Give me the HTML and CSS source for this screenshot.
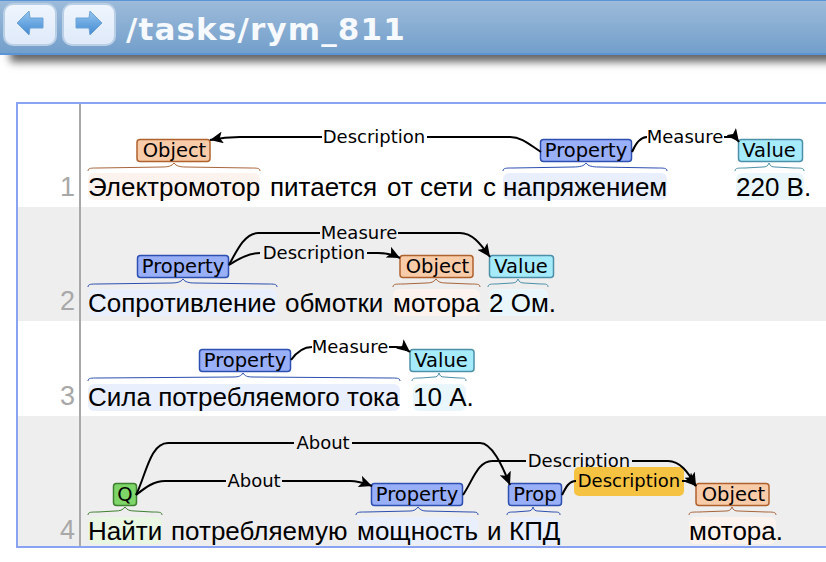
FILE: index.html
```html
<!DOCTYPE html>
<html>
<head>
    <title>/tasks/rym_811</title>
    <link rel="stylesheet" href="styles.css">
</head>
<body>
    <!-- Header -->
    <header class="header">
        <button class="nav-btn">
            <svg class="nav-arrow" viewBox="0 0 28 26">
                <defs>
                    <linearGradient id="arrowFill" x1="0" y1="0" x2="0" y2="1">
                        <stop offset="0" stop-color="#94c6f0"/>
                        <stop offset="1" stop-color="#4289d2"/>
                    </linearGradient>
                </defs>
                <path class="arrow-shape" d="M1 13 L13 1 L14 8 H27 V18 H14 L13 25 Z"/>
            </svg>
        </button>
        <button class="nav-btn">
            <svg class="nav-arrow flip" viewBox="0 0 28 26">
                <path class="arrow-shape" d="M1 13 L13 1 L14 8 H27 V18 H14 L13 25 Z"/>
            </svg>
        </button>
        <h1 class="title">/tasks/rym_811</h1>
    </header>

    <!-- Annotated document -->
    <main class="doc">

        <div class="row">
            <div class="num">1</div>
            <svg class="viz" width="745" height="103" viewBox="81 104 745 103">
                <defs>
                    <marker id="arrow" markerUnits="userSpaceOnUse" markerWidth="14" markerHeight="12" refX="13" refY="6" orient="auto">
                        <path d="M0 0 L13 6 L0 12 L3 6 Z"/>
                    </marker>
                </defs>

                <rect class="hl hl-object" x="88" y="173" width="172" height="27" rx="6"/>
                <rect class="hl hl-property" x="503" y="173" width="164" height="27" rx="6"/>
                <rect class="hl hl-value" x="736" y="173" width="68" height="27" rx="6"/>

                <text class="word" x="88" y="196">Электромотор</text>
                <text class="word" x="270" y="196">питается</text>
                <text class="word" x="387" y="196">от</text>
                <text class="word" x="420" y="196">сети</text>
                <text class="word" x="483" y="196">с</text>
                <text class="word" x="503" y="196">напряжением</text>
                <text class="word" x="736" y="196">220 В.</text>

                <path class="brace br-object" d="M88 171 C88 168 91 168 98 168 L162 167 C168 167 172 166 174 163 C176 166 180 167 186 167 L250 168 C257 168 260 168 260 171"/>
                <path class="brace br-property" d="M503 171 C503 168 506 168 513 168 L573 167 C580 167 584 166 586 163 C588 166 592 167 599 167 L657 168 C664 168 667 168 667 171"/>
                <path class="brace br-value" d="M735 171 C735 168 738 168 745 168 L763 167 C766 167 768 166 769 163 C770 166 772 167 775 167 L794 168 C801 168 804 168 804 171"/>

                <rect class="box box-object" x="137" y="139.500" width="73" height="22" rx="3"/>
                <text class="tag" x="174.500" y="157">Object</text>
                <rect class="box box-property" x="540.500" y="139.500" width="91" height="22" rx="3"/>
                <text class="tag" x="586" y="157">Property</text>
                <rect class="box box-value" x="738.500" y="139.500" width="64" height="22" rx="3"/>
                <text class="tag" x="769" y="157">Value</text>

                <path class="arc" d="M541 152 C530 145 522 137 510 137 H427"/>
                <path class="arc" d="M322 137 H240 C228 137 220 138 210 140" marker-end="url(#arrow)"/>
                <text class="label" x="374" y="143">Description</text>
                <path class="arc" d="M632 152 C635 145 640 137 647 137"/>
                <path class="arc" d="M724 137 H730 C733 137 736 138 739 142" marker-end="url(#arrow)"/>
                <text class="label" x="685" y="143">Measure</text>
            </svg>
        </div>

        <div class="row row-alt">
            <div class="num">2</div>
            <svg class="viz" width="745" height="114" viewBox="81 207 745 114">
                <rect class="hl hl-property" x="88" y="289" width="189" height="27" rx="6"/>
                <rect class="hl hl-object" x="393" y="289" width="87" height="27" rx="6"/>
                <rect class="hl hl-value" x="489" y="289" width="59" height="27" rx="6"/>

                <text class="word" x="88" y="312">Сопротивление</text>
                <text class="word" x="285" y="312">обмотки</text>
                <text class="word" x="393" y="312">мотора</text>
                <text class="word" x="489" y="312">2 Ом.</text>

                <path class="brace br-property" d="M88 287 C88 284 91 284 98 284 L171 283 C177 283 181 282 183 279 C185 282 189 283 195 283 L267 284 C274 284 277 284 277 287"/>
                <path class="brace br-object" d="M393 287 C393 284 396 284 403 284 L426 283 C431 283 434 282 436 279 C438 282 441 283 446 283 L470 284 C477 284 480 284 480 287"/>
                <path class="brace br-value" d="M488 287 C488 284 491 284 496 284 L512 283 C515 283 517 282 518 279 C519 282 521 283 524 283 L541 284 C546 284 548 284 548 287"/>

                <rect class="box box-property" x="137.500" y="255.500" width="91" height="22" rx="3"/>
                <text class="tag" x="183" y="273">Property</text>
                <rect class="box box-object" x="400" y="255.500" width="73" height="22" rx="3"/>
                <text class="tag" x="437.500" y="273">Object</text>
                <rect class="box box-value" x="489.500" y="255.500" width="64" height="22" rx="3"/>
                <text class="tag" x="521" y="273">Value</text>

                <path class="arc" d="M229 265 C237 250 245 233 258 233 H320"/>
                <path class="arc" d="M398 233 H460 C472 233 480 243 490 257" marker-end="url(#arrow)"/>
                <text class="label" x="359" y="239">Measure</text>
                <path class="arc" d="M229 265 C238 259 248 253 260 253"/>
                <path class="arc" d="M367 253 H378 C386 253 392 254 400 258" marker-end="url(#arrow)"/>
                <text class="label" x="314" y="259">Description</text>
            </svg>
        </div>

        <div class="row">
            <div class="num">3</div>
            <svg class="viz" width="745" height="95" viewBox="81 321 745 95">
                <rect class="hl hl-property" x="88" y="384" width="312" height="27" rx="6"/>
                <rect class="hl hl-value" x="413" y="384" width="53" height="27" rx="6"/>

                <text class="word" x="88" y="406">Сила потребляемого тока</text>
                <text class="word" x="413" y="406">10 А.</text>

                <path class="brace br-property" d="M88 381 C88 378 91 378 98 378 L233 377 C239 377 241 376 243 373 C245 376 247 377 253 377 L390 378 C397 378 400 378 400 381"/>
                <path class="brace br-value" d="M412 381 C412 378 415 378 421 378 L434 377 C437 377 438 376 439 373 C440 376 441 377 444 377 L459 378 C464 378 466 378 466 381"/>

                <rect class="box box-property" x="199.500" y="349.500" width="91" height="22" rx="3"/>
                <text class="tag" x="245" y="367">Property</text>
                <rect class="box box-value" x="410" y="349.500" width="64" height="22" rx="3"/>
                <text class="tag" x="441" y="367">Value</text>

                <path class="arc" d="M291 360 C296 353 302 347 312 347"/>
                <path class="arc" d="M389 347 H396 C401 347 405 348 410 352" marker-end="url(#arrow)"/>
                <text class="label" x="350" y="353">Measure</text>
            </svg>
        </div>

        <div class="row row-alt">
            <div class="num num-last">4</div>
            <svg class="viz" width="745" height="130" viewBox="81 416 745 130">
                <rect class="hl hl-question" x="88" y="517" width="74" height="27" rx="6"/>
                <rect class="hl hl-property" x="357" y="517" width="121" height="27" rx="6"/>
                <rect class="hl hl-property" x="508" y="517" width="51" height="27" rx="6"/>
                <rect class="hl hl-object" x="689" y="517" width="87" height="27" rx="6"/>

                <text class="word" x="88" y="540">Найти</text>
                <text class="word" x="171" y="540">потребляемую</text>
                <text class="word" x="357" y="540">мощность</text>
                <text class="word" x="487" y="540">и</text>
                <text class="word" x="509" y="540">КПД</text>
                <text class="word" x="689" y="540">мотора.</text>

                <path class="brace br-question" d="M88 515 C88 512 91 512 98 512 L115 511 C120 511 123 510 125 507 C127 510 130 511 135 511 L152 512 C159 512 162 512 162 515"/>
                <path class="brace br-property" d="M356 515 C356 512 359 512 366 512 L410 511 C413 511 416 510 418 507 C420 510 423 511 426 511 L470 512 C476 512 478 512 478 515"/>
                <path class="brace br-property" d="M507 515 C507 512 510 512 515 512 L528 511 C531 511 532 510 533 507 C534 510 535 511 538 511 L553 512 C558 512 560 512 560 515"/>
                <path class="brace br-object" d="M689 515 C689 512 692 512 699 512 L726 511 C729 511 731 510 732 507 C733 510 735 511 738 511 L766 512 C773 512 776 512 776 515"/>

                <rect class="box box-question" x="113.500" y="483.500" width="23" height="22" rx="3"/>
                <text class="tag" x="125" y="501">Q</text>
                <rect class="box box-property" x="371.500" y="483.500" width="91" height="22" rx="3"/>
                <text class="tag" x="417" y="501">Property</text>
                <rect class="box box-property" x="508.500" y="483.500" width="53" height="22" rx="3"/>
                <text class="tag" x="535" y="501">Prop</text>
                <rect class="box box-object" x="696" y="483.500" width="73" height="22" rx="3"/>
                <text class="tag" x="733.500" y="501">Object</text>

                <path class="arc" d="M136 495 C146 475 150 443 168 443 H294"/>
                <path class="arc" d="M352 443 H480 C492 443 502 465 510 485" marker-end="url(#arrow)"/>
                <text class="label" x="323" y="449">About</text>
                <path class="arc" d="M136 495 C146 487 154 481 165 481 H226"/>
                <path class="arc" d="M282 481 H350 C358 481 364 483 372 486" marker-end="url(#arrow)"/>
                <text class="label" x="254" y="487">About</text>
                <path class="arc" d="M463 495 C473 480 478 461 492 461 H526"/>
                <text class="label" x="579" y="467">Description</text>
                <!-- the highlighted label sits on top of the one above it -->
                <rect class="label-hl" x="574" y="467" width="110" height="29" rx="5"/>
                <path class="arc" d="M632 461 H668 C680 461 688 472 696 486" marker-end="url(#arrow)"/>
                <path class="arc" d="M562 495 C566 487 569 481 576 481"/>
                <path class="arc" d="M682 481 H688 C691 481 693 483 696 486" marker-end="url(#arrow)"/>
                <text class="label" x="629" y="487">Description</text>
            </svg>
        </div>

    </main>
</body>
</html>
```

FILE: styles.css
```css
html, body {
    margin: 0;
    overflow: hidden;
}
body {
    width: 826px;
    height: 562px;
    background-color: white;
}

/* header */
.header {
    display: flex;
    align-items: flex-start;
    gap: 5px;
    box-sizing: border-box;
    height: 55px;
    padding: 2px 3px;
    border-top: 1px solid #5b94d6;
    border-bottom: 2px solid #5b94d6;
    background: linear-gradient(#9dbbda, #739fcb);
    box-shadow: 10px 7px 8px #666;
}
.nav-btn {
    display: flex;
    align-items: center;
    justify-content: center;
    width: 54px;
    height: 43px;
    padding: 0 0 4px;
    border: 2px solid #b9cfe6;
    border-radius: 10px;
    background: linear-gradient(#eef5fd, #dfeafa);
}
.nav-arrow {
    width: 28px;
    height: 26px;
}
.arrow-shape {
    fill: url(#arrowFill);
    stroke: #6fa3d6;
    stroke-linejoin: round;
}
.flip {
    transform: scaleX(-1);
}
.title {
    margin: 0 0 0 5px;
    font-family: "DejaVu Sans", sans-serif;
    font-size: 31px;
    font-weight: bold;
    letter-spacing: 1.15px;
    line-height: 53px;
    color: #f6f9fd;
}

/* document */
.doc {
    box-sizing: border-box;
    width: 812px;
    margin: 47px 0 0 16px;
    border: 2px solid #8aa2f2;
}
.row {
    display: flex;
    background-color: white;
}
.row-alt {
    background-color: #eeeeee;
}
.num {
    flex: none;
    box-sizing: border-box;
    width: 63px;
    padding: 0 4px 5px 0;
    border-right: 2px solid #a8a8a8;
    display: flex;
    align-items: flex-end;
    justify-content: flex-end;
    font-family: "Liberation Sans", sans-serif;
    font-size: 27px;
    line-height: 30px;
    color: #a8a8a8;
}
.num-last {
    padding-bottom: 1px;
}
.viz {
    display: block;
    flex: none;
}

/* svg text */
.word {
    font-family: "Liberation Sans", sans-serif;
    font-size: 26px;
    fill: black;
    white-space: pre;
}
.tag {
    font-family: "DejaVu Sans", sans-serif;
    font-size: 19.500px;
    text-anchor: middle;
}
.label {
    font-family: "DejaVu Sans", sans-serif;
    font-size: 18px;
    text-anchor: middle;
}

/* svg shapes */
.arc {
    fill: none;
    stroke: black;
    stroke-width: 2;
}
.brace {
    fill: none;
    stroke-width: 1;
}
.label-hl {
    fill: #f5c242;
}
.box {
    stroke-width: 1.500;
}
.box-object { fill: #f8cba9; stroke: #b0622e; }
.box-property { fill: #99aff8; stroke: #2c4fb0; }
.box-value { fill: #a5ebfb; stroke: #4c90a8; }
.box-question { fill: #7ed668; stroke: #3f7f30; }

.hl-object { fill: #fdf3ee; }
.hl-property { fill: #e9effd; }
.hl-value { fill: #e9f7fd; }
.hl-question { fill: #e8f6e2; }

.br-object { stroke: #a8653a; }
.br-property { stroke: #2c4fb0; }
.br-value { stroke: #4c90a8; }
.br-question { stroke: #3f7f30; }
```
